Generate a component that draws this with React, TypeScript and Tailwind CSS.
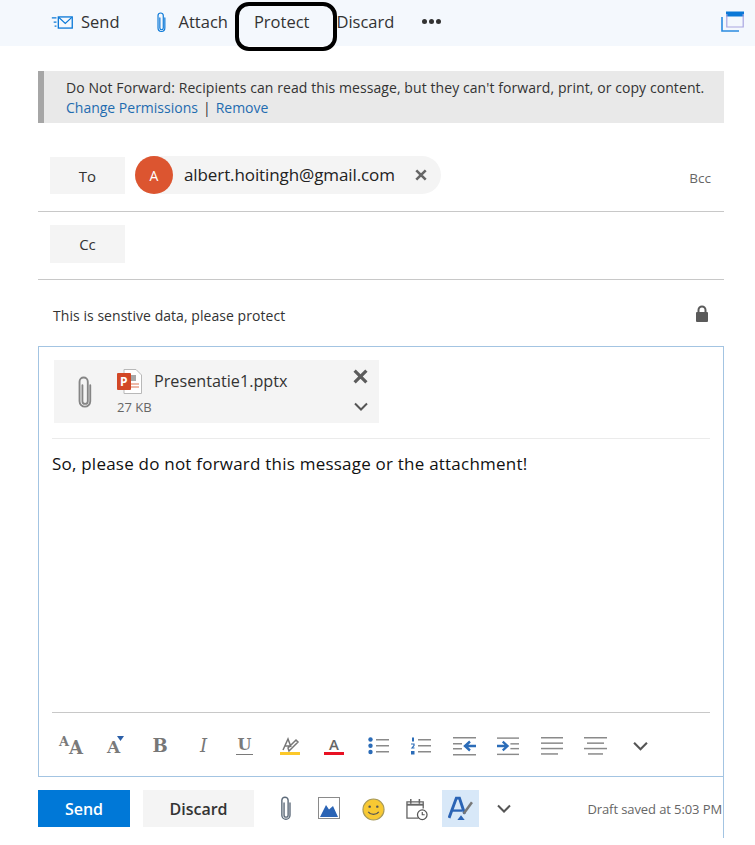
import React from "react";

const font = { fontFamily: '"Open Sans", "Noto Sans", sans-serif' };
const slab = { fontFamily: '"DejaVu Serif", serif' };

function Clip({ className, color }: { className?: string; color: string }) {
  return (
    <svg className={className} viewBox="0 0 14 32" fill="none" stroke={color} strokeWidth="1.8" strokeLinecap="round">
      <path d="M4.5 9v15.500a2.600 2.600 0 0 0 5.200 0V5.500a4 4 0 0 0-8 0v19a5.200 5.200 0 0 0 10.400 0V9" />
    </svg>
  );
}

function Chevron({ className, color = "#555" }: { className?: string; color?: string }) {
  return (
    <svg className={className} viewBox="0 0 14 9" fill="none" stroke={color} strokeWidth="2">
      <path d="M1 1.500 7 7.500 13 1.500" />
    </svg>
  );
}

function Cross({ className, color = "#666" }: { className?: string; color?: string }) {
  return (
    <svg className={className} viewBox="0 0 14 14" fill="none" stroke={color} strokeWidth="3">
      <path d="M1.500 1.500 12.500 12.500M12.500 1.500 1.500 12.500" />
    </svg>
  );
}

function Lines({ rows }: { rows: [number, number][] }) {
  return (
    <>
      {rows.map(([x, w], i) => (
        <rect key={i} x={x} y={1 + i * 5.4} width={w} height="1.500" fill="#8a8a8a" />
      ))}
    </>
  );
}

function FormatBar() {
  const letter = "flex-none text-[#777] font-bold leading-none text-center";
  return (
    <div className="flex items-center h-[63px] pl-[7px] pt-[2px]">
      <div className="flex-none w-[24px] h-[22px] flex">
        <span className="text-[13px] leading-none text-[#7a7a7a] font-semibold w-[10px]" style={slab}>A</span>
        <span className="mt-[4px] text-[18px] leading-none text-[#7a7a7a] font-semibold" style={slab}>A</span>
      </div>
      <div className="flex-none w-[16px] h-[20px] relative ml-[24px]">
        <span className="absolute left-0 top-[3px] text-[17px] leading-none text-[#7a7a7a] font-semibold" style={slab}>A</span>
        <svg className="absolute left-[10px] top-0 w-[7px] h-[5px]" viewBox="0 0 7 5">
          <path d="M0 0h7L3.500 5z" fill="#2b5fa8" />
        </svg>
      </div>
      <span className={`${letter} ml-[29px] text-[18px] w-[16px]`} style={slab}>B</span>
      <span className={`${letter} ml-[29px] text-[18px] w-[13px] italic font-normal`} style={slab}>I</span>
      <div className="flex-none ml-[26px] w-[17px] flex flex-col items-center">
        <span className="text-[16px] leading-[16px] text-[#7a7a7a] font-bold" style={slab}>U</span>
        <div className="mt-[1px] w-[17px] h-[1px] bg-[#7a7a7a]" />
      </div>
      <div className="flex-none ml-[27px] w-[20px] flex flex-col items-center">
        <svg className="w-[20px] h-[15px]" viewBox="0 0 20 15" fill="none" stroke="#777" strokeWidth="1.500">
          <path d="M3 13 8 2l3 8M5 9h5M9 14l9-9-2-2-8 8z" />
        </svg>
        <div className="w-[20px] h-[3px] bg-[#fcc829]" />
      </div>
      <div className="flex-none ml-[24px] w-[20px] flex flex-col items-center">
        <span className="text-[15px] leading-[15px] text-[#666] font-semibold">A</span>
        <div className="w-[20px] h-[3px] bg-[#e81123]" />
      </div>
      <svg className="flex-none ml-[24px] w-[21px] h-[18px]" viewBox="0 0 21 18">
        <circle cx="2.500" cy="2.500" r="2.200" fill="#2b6cb8" />
        <circle cx="2.500" cy="8.800" r="2.200" fill="#2b6cb8" />
        <circle cx="2.500" cy="15" r="2.200" fill="#2b6cb8" />
        <rect x="8" y="2" width="13" height="1.500" fill="#8a8a8a" />
        <rect x="8" y="8" width="13" height="1.500" fill="#8a8a8a" />
        <rect x="8" y="14" width="13" height="1.500" fill="#8a8a8a" />
      </svg>
      <svg className="flex-none ml-[21px] w-[21px] h-[18px]" viewBox="0 0 21 18">
        <rect x="2" y="0.500" width="2" height="4" fill="#2b6cb8" />
        <path d="M1 7h3v1.500L2 11h2.500" fill="none" stroke="#2b6cb8" strokeWidth="1.200" />
        <rect x="1" y="14" width="3.500" height="3.500" fill="#2b6cb8" />
        <rect x="8" y="2" width="13" height="1.500" fill="#8a8a8a" />
        <rect x="8" y="8" width="13" height="1.500" fill="#8a8a8a" />
        <rect x="8" y="14" width="13" height="1.500" fill="#8a8a8a" />
      </svg>
      <svg className="flex-none ml-[22px] w-[23px] h-[20px]" viewBox="0 0 23 20">
        <rect x="0" y="1" width="23" height="1.500" fill="#8a8a8a" />
        <rect x="0" y="7" width="9" height="1.500" fill="#8a8a8a" />
        <rect x="0" y="12" width="9" height="1.500" fill="#8a8a8a" />
        <rect x="0" y="18" width="23" height="1.500" fill="#8a8a8a" />
        <path d="M23 10H13M17 5.500 12 10l5 4.500" fill="none" stroke="#2b6cb8" strokeWidth="2.400" />
      </svg>
      <svg className="flex-none ml-[21px] w-[22px] h-[20px]" viewBox="0 0 23 20">
        <rect x="0" y="1" width="23" height="1.500" fill="#8a8a8a" />
        <rect x="14" y="7" width="9" height="1.500" fill="#8a8a8a" />
        <rect x="14" y="12" width="9" height="1.500" fill="#8a8a8a" />
        <rect x="0" y="18" width="23" height="1.500" fill="#8a8a8a" />
        <path d="M0 10h10M6 5.500 11 10l-5 4.500" fill="none" stroke="#2b6cb8" strokeWidth="2.400" />
      </svg>
      <svg className="flex-none ml-[22px] w-[22px] h-[19px]" viewBox="0 0 22 19">
        <Lines rows={[[0, 22], [0, 22], [0, 22], [0, 17]]} />
      </svg>
      <svg className="flex-none ml-[21px] w-[23px] h-[19px]" viewBox="0 0 23 19">
        <Lines rows={[[0, 23], [3, 17], [0, 23], [4, 15]]} />
      </svg>
      <Chevron className="flex-none ml-[26px] w-[15px] h-[10px]" />
    </div>
  );
}

export default function App() {
  return (
    <div className="relative w-[755px] h-[845px] bg-white overflow-hidden text-[#333]" style={font}>
      {/* top command bar */}
      <div className="relative h-[46px] bg-[#f4f8fd] flex items-center text-[16.5px] pb-[2px]">
        <svg className="ml-[51px] w-[23px] h-[13px]" viewBox="0 0 23 14" fill="none" stroke="#0a78d7" strokeWidth="1.400">
          <rect x="7" y="1" width="15" height="12" />
          <path d="m7.500 1.500 7 6.500 7-6.500" />
          <path d="M0 2h5M2 6.500h3M3 11h2" />
        </svg>
        <span className="ml-[7px]">Send</span>
        <Clip className="ml-[36px] w-[11px] h-[21px]" color="#0a78d7" />
        <span className="ml-[12px]">Attach</span>
        <span className="ml-[26px]">Protect</span>
        <span className="ml-[27px]">Discard</span>
        <div className="ml-[28px] mb-[1px] flex gap-[2px]">
          <div className="w-[5px] h-[5px] rounded-full bg-[#333]" />
          <div className="w-[5px] h-[5px] rounded-full bg-[#333]" />
          <div className="w-[5px] h-[5px] rounded-full bg-[#333]" />
        </div>
        <svg className="absolute left-[721px] top-[11px] w-[23px] h-[21px]" viewBox="0 0 23 21" fill="none">
          <path d="M5 .5h18v5H5z" fill="#0a78d7" />
          <path d="M5.800 3v13h16.400V3" stroke="#a9a6e0" strokeWidth="1.200" />
          <path d="M1 6v14h17" stroke="#2a8be0" strokeWidth="1.600" />
        </svg>
        {/* hand drawn annotation round Protect */}
        <div className="absolute left-[235px] top-[2px] w-[102px] h-[49px] border-[4px] border-black rounded-[14px]" />
      </div>

      <div className="ml-[38px] w-[686px]">
        {/* rights banner */}
        <div className="mt-[25px] h-[52px] bg-[#e9e9e9] border-l-[6px] border-[#a6a6a6] pl-[22px] pt-[7px] text-[14px] leading-[20px]">
          <div className="tracking-[0.08px]">Do Not Forward: Recipients can read this message, but they can't forward, print, or copy content.</div>
          <div>
            <span className="text-[#1f6cb0]">Change Permissions</span>
            <span className="mx-[5px]">|</span>
            <span className="text-[#1f6cb0]">Remove</span>
          </div>
        </div>

        {/* recipients */}
        <div className="mt-[33px] h-[56px] border-b border-[#c8c8c8] flex items-start pl-[12px] pr-[13px]">
          <div className="mt-[1px] w-[75px] h-[37px] bg-[#f4f4f4] flex items-center justify-center text-[15px] pt-[1px]">To</div>
          <div className="ml-[10px] w-[306px] h-[38px] rounded-full bg-[#f4f4f4] flex items-center">
            <div className="w-[38px] h-[38px] rounded-full bg-[#dc5530] text-white text-[14px] flex items-center justify-center">A</div>
            <span className="ml-[11px] text-[17px] tracking-[-0.1px] text-[#222]">albert.hoitingh@gmail.com</span>
            <Cross className="ml-[20px] w-[12px] h-[12px]" />
          </div>
          <span className="ml-auto mt-[12px] text-[13.5px] text-[#666]">Bcc</span>
        </div>
        <div className="h-[68px] border-b border-[#c8c8c8] pl-[12px] pt-[13px]">
          <div className="w-[75px] h-[38px] bg-[#f4f4f4] flex items-center justify-center text-[15px]">Cc</div>
        </div>

        {/* subject */}
        <div className="h-[66px] flex items-start pl-[15px] pr-[15px] text-[14px] tracking-[0.05px]">
          <span className="mt-[25px]">This is senstive data, please protect</span>
          <svg className="ml-auto mt-[25px] w-[14px] h-[17px]" viewBox="0 0 14 17">
            <path d="M3.500 8V5a3.500 3.500 0 0 1 7 0v3" fill="none" stroke="#5a5a5a" strokeWidth="2" />
            <rect x="1" y="7" width="12" height="10" rx="1" fill="#5a5a5a" />
          </svg>
        </div>

        {/* editor */}
        <div className="h-[431px] border border-[#a3c4e2] flex flex-col pl-[13px] pr-[13px]">
          <div className="mt-[13px] ml-[2px] w-[325px] h-[63px] bg-[#f4f4f4] flex">
            <Clip className="ml-[23px] mt-[16px] w-[16px] h-[33px]" color="#858585" />
            <div className="ml-[24px] flex flex-col">
              <div className="flex items-center mt-[9px]">
                <svg className="w-[25px] h-[25px]" viewBox="0 0 25 25">
                  <path d="M7 .500h12l5.500 5.500v18.500H7z" fill="#fff" stroke="#b8b8b8" />
                  <path d="M13 6h6v6h-6z" fill="#a8a8a8" />
                  <path d="M14 15h8M14 18h8" stroke="#e8a28c" strokeWidth="1.400" />
                  <rect x="0" y="4" width="14" height="17" rx="1" fill="#d24726" />
                  <text x="3" y="17" fontSize="12" fontWeight="700" fill="#fff">P</text>
                </svg>
                <span className="ml-[12px] text-[16.2px] text-[#333]">Presentatie1.pptx</span>
              </div>
              <span className="text-[13px] mt-[4px] text-[#666]">27 KB</span>
            </div>
            <div className="ml-auto mr-[11px] mt-[9px] flex flex-col items-center">
              <Cross className="w-[15px] h-[15px]" color="#5c5c5c" />
              <Chevron className="mt-[18px] w-[14px] h-[9px]" />
            </div>
          </div>
          <div className="mt-[15px] h-[1px] bg-[#ebebeb]" />
          <div className="mt-[13px] text-[17px] leading-[24px] tracking-[0.22px] text-[#111]">
            So, please do not forward this message or the attachment!
          </div>
          <div className="mt-auto h-[1px] bg-[#c8c8c8]" />
          <FormatBar />
        </div>

        {/* bottom action bar */}
        <div className="h-[61px] border-r border-[#a3c4e2] flex items-start pt-[13px]">
          <div className="w-[92px] h-[37px] bg-[#0078d7] text-white text-[16px] font-semibold flex items-center justify-center">Send</div>
          <div className="ml-[13px] w-[111px] h-[37px] bg-[#f4f4f4] text-[16px] font-semibold flex items-center justify-center">Discard</div>
          <Clip className="ml-[25px] mt-[6px] w-[14px] h-[25px]" color="#5d6b7a" />
          <svg className="ml-[25px] mt-[7px] w-[22px] h-[22px]" viewBox="0 0 22 22">
            <rect x=".500" y=".500" width="21" height="21" fill="#fff" stroke="#8a8a8a" />
            <path d="M2 20 8 8l3 4.500L15 9l5 11z" fill="#2b64b5" />
          </svg>
          <svg className="ml-[22px] mt-[8px] w-[23px] h-[23px]" viewBox="0 0 24 24">
            <circle cx="12" cy="12" r="11" fill="#f8c933" stroke="#a89a5a" strokeWidth="1.200" />
            <circle cx="8" cy="9" r="1.300" fill="#555" />
            <circle cx="16" cy="9" r="1.300" fill="#555" />
            <path d="M6.500 14.500c2.500 3.500 8.500 3.500 11 0" fill="none" stroke="#555" strokeWidth="1.300" />
          </svg>
          <svg className="ml-[21px] mt-[8px] w-[22px] h-[23px]" viewBox="0 0 23 24" fill="none">
            <path d="M13 21H1V4h17v7" stroke="#666" strokeWidth="1.400" />
            <path d="M1 7h17" stroke="#666" strokeWidth="2" />
            <path d="M5 1v5M14 1v5" stroke="#666" strokeWidth="1.600" />
            <circle cx="17" cy="17.500" r="5" fill="#fff" stroke="#555" strokeWidth="1.300" />
            <path d="M17 14.500v3h2.500" stroke="#555" strokeWidth="1.200" />
          </svg>
          <div className="ml-[14px] w-[37px] h-[37px] bg-[#d8e8f8] flex items-center justify-center">
            <svg className="w-[25px] h-[25px]" viewBox="0 0 24 24" fill="none">
              <path d="M1 21 8 2h3l5 15" stroke="#2b64b5" strokeWidth="2.800" />
              <path d="M4.500 14h9" stroke="#2b64b5" strokeWidth="2.200" />
              <path d="M9 23h7l-3.500-4.500z" fill="#2b64b5" />
              <path d="M15 17 23 6" stroke="#777" strokeWidth="2.400" />
            </svg>
          </div>
          <Chevron className="ml-[18px] mt-[14px] w-[14px] h-[9px]" />
          <span className="ml-auto mr-[1px] mt-[10px] text-[13px] tracking-[-0.1px] text-[#666]">Draft saved at 5:03 PM</span>
        </div>
      </div>
    </div>
  );
}
